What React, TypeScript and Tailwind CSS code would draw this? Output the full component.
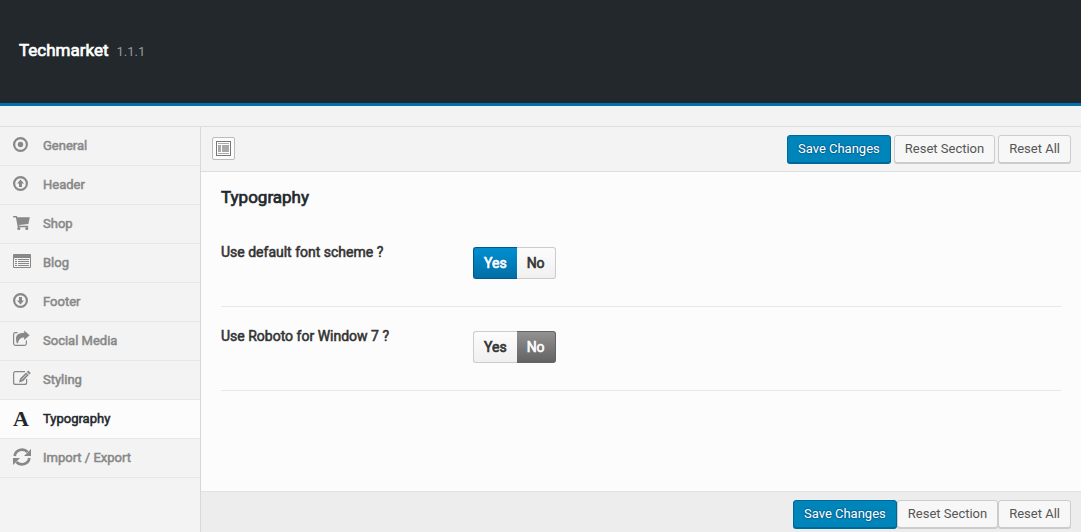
import { useState, type ReactNode } from "react";

const fauxBold = "[-webkit-text-stroke:0.04em_currentColor]";

const icons: Record<string, ReactNode> = {
  General: (
    <>
      <circle cx="7.5" cy="9.5" r="6.4" fill="none" stroke="currentColor" strokeWidth="2.2" />
      <circle cx="7.5" cy="9.5" r="2.7" />
    </>
  ),
  Header: (
    <>
      <circle cx="7.5" cy="9.5" r="6.4" fill="none" stroke="currentColor" strokeWidth="2.2" />
      <path d="M7.5 5.5 L11 9.6 H9 V13 H6 V9.6 H4 Z" />
    </>
  ),
  Shop: (
    <>
      <path d="M0 3 H3.8 L4.4 4.2 H16.8 L15.4 11 L6 12 L6.2 12.8 H15.2 V14.2 H4.8 L2.9 4.4 H0.4 Z" />
      <circle cx="5.8" cy="15.5" r="1.6" />
      <circle cx="13.8" cy="15.5" r="1.6" />
    </>
  ),
  Blog: (
    <>
      <path fillRule="evenodd" d="M1 2 H17 Q18 2 18 3 V15 Q18 16 17 16 H1 Q0 16 0 15 V3 Q0 2 1 2 Z M1 6 V15 H17 V6 Z" />
      <path d="M2 7 H4 V8 H2 Z M5 7 H16 V8 H5 Z M2 9 H4 V10 H2 Z M5 9 H16 V10 H5 Z M2 11 H4 V12 H2 Z M5 11 H16 V12 H5 Z M2 13 H4 V14 H2 Z M5 13 H16 V14 H5 Z" />
    </>
  ),
  Footer: (
    <>
      <circle cx="7.5" cy="9.5" r="6.4" fill="none" stroke="currentColor" strokeWidth="2.2" />
      <path d="M7.5 13.5 L11 9.4 H9 V6 H6 V9.4 H4 Z" />
    </>
  ),
  "Social Media": (
    <>
      <path d="M4.5 2.6 H2.4 Q0.6 2.6 0.6 4.4 V13.6 Q0.6 15.4 2.4 15.4 H11.6 Q13.4 15.4 13.4 13.6 V10.5" fill="none" stroke="currentColor" strokeWidth="1.2" />
      <path d="M11.2 0.6 L16.6 5.2 L11.2 10 V7.6 Q6 7.4 4.9 13.2 H3.8 Q0.4 2.8 11.2 2.8 Z" />
    </>
  ),
  Styling: (
    <>
      <path d="M12 2.6 H2.6 Q0.6 2.6 0.6 4.6 V13.4 Q0.6 15.4 2.6 15.4 H11.6 Q13.6 15.4 13.6 13.4 V10" fill="none" stroke="currentColor" strokeWidth="1.2" />
      <path d="M15.2 1.4 L17.8 4 L16.4 5.4 L13.8 2.8 Z M13.2 3.4 L15.8 6 L10 12.2 L6 13.4 L7 9.6 Z" />
      <path d="M8.6 10.8 L13.8 5.4" stroke="#f3f3f3" strokeWidth="0.7" />
    </>
  ),
  Typography: null,
  "Import / Export": (
    <g transform="translate(0 1)">
      <path d="M1.6 8 A7.6 7.6 0 0 1 14.6 4" fill="none" stroke="currentColor" strokeWidth="2.7" />
      <path d="M18 1 V8 H11 Z" />
      <path d="M16.4 10 A7.6 7.6 0 0 1 3.4 14" fill="none" stroke="currentColor" strokeWidth="2.7" />
      <path d="M0 17 V10 H7 Z" />
    </g>
  ),
};

function NavIcon({ name }: { name: string }) {
  if (name === "Typography") {
    return (
      <span aria-hidden="true" className="w-[18px] shrink-0 font-['Liberation_Serif',serif] text-[22px] leading-7 font-bold [-webkit-text-stroke:0]">
        A
      </span>
    );
  }
  return (
    <svg className="mb-1 size-[18px] shrink-0 overflow-visible" viewBox="0 0 18 18" fill="currentColor" aria-hidden="true">
      {icons[name]}
    </svg>
  );
}

function ActionButton({ primary, children }: { primary?: boolean; children: ReactNode }) {
  const look = primary
    ? "border-[#006799] bg-[#0085ba] text-white shadow-[0_1px_0_#006799] [text-shadow:0_-1px_1px_#006799,1px_0_1px_#006799,0_1px_1px_#006799,-1px_0_1px_#006799]"
    : "border-[#ccc] bg-[#f7f7f7] text-[#555] shadow-[0_1px_0_#ccc]";
  return (
    <button type="button" className={`h-7 cursor-pointer rounded-[3px] border px-[10px] text-[13px] leading-[26px] whitespace-nowrap ${look}`}>
      {children}
    </button>
  );
}

function SwitchField({ name, label, initial }: { name: string; label: string; initial: boolean }) {
  const [on, setOn] = useState(initial);
  const base = "block h-8 cursor-pointer border px-[10px] text-sm leading-[30px]";
  const idle = "border-[#ccc] bg-linear-to-b from-[#fcfcfc] to-[#f0f0f0] text-[#333]";
  return (
    <div role="radiogroup" aria-label={label} className="flex min-h-[84px] border-b border-[#e7e7e7] pt-[19px]">
      <div className={`w-[30%] text-sm leading-5 text-[#333] ${fauxBold}`}>{label}</div>
      <div className={`flex pt-[5px] ${fauxBold}`}>
        <label className="relative">
          <input type="radio" name={name} className="sr-only" checked={on} onChange={() => setOn(true)} />
          <span className={`${base} rounded-l-[3px] border-r-0 ${on ? "border-[#005a87] bg-linear-to-b from-[#0090d2] to-[#006ea5] text-white" : idle}`}>Yes</span>
        </label>
        <label className="relative">
          <input type="radio" name={name} className="sr-only" checked={!on} onChange={() => setOn(false)} />
          <span className={`${base} rounded-r-[3px] border-l-0 ${on ? idle : "border-[#636363] bg-linear-to-b from-[#929292] to-[#636363] text-white"}`}>No</span>
        </label>
      </div>
    </div>
  );
}

export default function App() {
  const [active, setActive] = useState("Typography");
  return (
    <div className="flex min-h-screen flex-col bg-[#f3f3f3] font-['Roboto',sans-serif]">
      <header className="flex h-[106px] items-baseline border-b-3 border-[#0073aa] bg-[#23282d] px-[19px] pt-[38px]">
        <h1 className={`text-[17px] leading-6 text-white ${fauxBold}`}>Techmarket</h1>
        <span className="ml-2 text-[13px] text-[#999]">1.1.1</span>
      </header>
      <div className="h-5" />
      <div className="flex grow border-t border-[#dedede]">
        <nav className="w-[200px] shrink-0">
          <ul>
            {Object.keys(icons).map((name) => (
              <li key={name}>
                <a
                  href="#"
                  onClick={(e) => { e.preventDefault(); setActive(name); }}
                  className={`flex h-[39px] items-center gap-3 border-b border-[#e7e7e7] pl-[13px] text-[13px] leading-[18px] ${fauxBold} ${active === name ? "bg-[#fcfcfc] text-[#23282d]" : "text-[#888]"}`}
                >
                  <NavIcon name={name} />
                  {name}
                </a>
              </li>
            ))}
          </ul>
        </nav>
        <main className="flex min-w-0 grow flex-col border-l border-[#d8d8d8] bg-[#fcfcfc]">
          <div className="flex h-[45px] items-start justify-between border-b border-[#dedede] bg-[#f3f3f3] pt-2 pr-[10px] pl-[11px]">
            <button type="button" aria-label="Expand all options" className="mt-[2px] flex size-[23px] items-center justify-center rounded-[2px] border border-[#bbb] bg-[#fcfcfc]">
              <svg width="15" height="15" viewBox="0 0 15 15" aria-hidden="true">
                <rect x="0.5" y="0.5" width="14" height="14" fill="#fff" stroke="#777" />
                <path d="M2 2 H13 V3 H2 Z M2 4 H5 V11 H2 Z M6 4 H13 V11 H6 Z M2 12 H13 V13 H2 Z" fill="#aaa" />
              </svg>
            </button>
            <div className="flex gap-[3px]">
              <ActionButton primary>Save Changes</ActionButton>
              <ActionButton>Reset Section</ActionButton>
              <ActionButton>Reset All</ActionButton>
            </div>
          </div>
          <section className="grow px-5 pt-[13px] pb-5">
            <h2 className={`mb-[14px] text-[17px] leading-6 text-[#23282d] ${fauxBold}`}>Typography</h2>
            <SwitchField name="font-scheme" label="Use default font scheme ?" initial={true} />
            <SwitchField name="roboto" label="Use Roboto for Window 7 ?" initial={false} />
          </section>
          <footer className="flex h-[41px] justify-end border-t border-[#e3e3e3] bg-[#ededed] pt-2 pr-[10px]">
            <ActionButton primary>Save Changes</ActionButton>
            <ActionButton>Reset Section</ActionButton>
            <ActionButton>Reset All</ActionButton>
          </footer>
        </main>
      </div>
    </div>
  );
}
